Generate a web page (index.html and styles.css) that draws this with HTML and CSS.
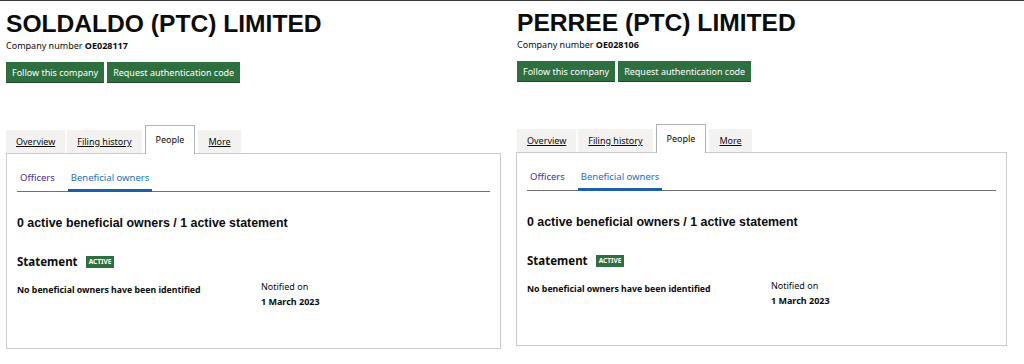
FILE: index.html
```html
<!DOCTYPE html>
<html lang="en">

<head>
    <meta charset="UTF-8">
    <meta name="viewport" content="width=device-width, initial-scale=1.0">
    <title>People - Beneficial owners</title>
    <link rel="stylesheet" href="styles.css">
</head>

<body>
    <div class="shots">
        <div class="page">
            <h1>SOLDALDO (PTC) LIMITED</h1>
            <p class="company-number">Company number <strong>OE028117</strong></p>
            <div class="actions">
                <button>Follow this company</button>
                <button>Request authentication code</button>
            </div>
            <ul class="tabs">
                <li><a href="#">Overview</a></li>
                <li><a href="#">Filing history</a></li>
                <li class="selected"><a href="#">People</a></li>
                <li><a href="#">More</a></li>
            </ul>
            <div class="panel">
                <ul class="subtabs">
                    <li><a href="#" class="visited">Officers</a></li>
                    <li class="current"><a href="#">Beneficial owners</a></li>
                </ul>
                <h2 class="summary">0 active beneficial owners / 1 active statement</h2>
                <h3 class="statement">Statement <span class="tag">ACTIVE</span></h3>
                <div class="statement-row">
                    <p class="statement-text">No beneficial owners have been identified</p>
                    <dl class="notified">
                        <dt>Notified on</dt>
                        <dd>1 March 2023</dd>
                    </dl>
                </div>
            </div>
        </div>

        <div class="page page-right">
            <h1>PERREE (PTC) LIMITED</h1>
            <p class="company-number">Company number <strong>OE028106</strong></p>
            <div class="actions">
                <button>Follow this company</button>
                <button>Request authentication code</button>
            </div>
            <ul class="tabs">
                <li><a href="#">Overview</a></li>
                <li><a href="#">Filing history</a></li>
                <li class="selected"><a href="#">People</a></li>
                <li><a href="#">More</a></li>
            </ul>
            <div class="panel">
                <ul class="subtabs">
                    <li><a href="#" class="visited">Officers</a></li>
                    <li class="current"><a href="#">Beneficial owners</a></li>
                </ul>
                <h2 class="summary">0 active beneficial owners / 1 active statement</h2>
                <h3 class="statement">Statement <span class="tag">ACTIVE</span></h3>
                <div class="statement-row">
                    <p class="statement-text">No beneficial owners have been identified</p>
                    <dl class="notified">
                        <dt>Notified on</dt>
                        <dd>1 March 2023</dd>
                    </dl>
                </div>
            </div>
        </div>
    </div>
</body>

</html>
```

FILE: styles.css
```css
body {
    margin: 0;
    padding: 0;
    background-color: #ffffff;
    color: #0b0c0c;
    font-family: "Noto Sans", "Liberation Sans", sans-serif;
}

.shots {
    display: grid;
    grid-template-columns: 511px 513px;
    border-top: 1px solid #3a3a3a;
}

.page {
    padding: 8px 0 0 6px;
}

.page-right {
    padding-top: 7px;
}

h1 {
    margin: 0;
    font-family: "Liberation Sans", Arial, sans-serif;
    font-size: 24.6px;
    font-weight: bold;
    line-height: 30px;
}

.company-number {
    margin: 0;
    font-size: 9px;
    line-height: 14px;
}

.actions {
    display: flex;
    gap: 3px;
    margin-top: 9px;
}

button {
    height: 21px;
    padding: 0 6px;
    border: none;
    border-bottom: 1px solid #1d4a2a;
    background-color: #2e6f40;
    color: white;
    font-family: "Noto Sans", "Liberation Sans", sans-serif;
    font-size: 9px;
    cursor: pointer;
}

.tabs {
    display: flex;
    align-items: flex-end;
    gap: 2px;
    list-style: none;
    margin: 43px 0 0;
    padding: 0;
    height: 27px;
}

.tabs li {
    background-color: #f3f2f1;
    height: 23px;
    padding: 0 10px;
    display: flex;
    align-items: center;
}

.tabs a {
    color: #0b0c0c;
    font-size: 9px;
}

.tabs li.selected {
    background-color: #ffffff;
    height: 27px;
    margin: 0 1px -1px;
    padding: 0 10px 1px;
    border: 1px solid #b1b4b6;
    border-bottom: none;
    position: relative;
    z-index: 1;
}

.tabs li.selected a {
    text-decoration: none;
}

.panel {
    width: 495px;
    height: 196px;
    border: 1px solid #c8cacb;
    padding: 0 10px 0 10px;
    box-sizing: border-box;
}

.page-right .panel {
    width: 491px;
    height: 194px;
    margin-left: -1px;
}

.subtabs {
    display: flex;
    list-style: none;
    margin: 6px 0 0;
    padding: 0 0 0 3px;
    border-bottom: 1px solid #6f7275;
}

.subtabs li {
    padding: 4px 0 5px;
    margin-right: 16px;
}

.subtabs a {
    font-size: 9.5px;
    text-decoration: none;
    color: #1d70b8;
}

.subtabs a.visited {
    color: #4c2c92;
}

.subtabs li.current {
    border-bottom: 3px solid #1d5fa6;
    margin-bottom: -1px;
    margin-left: -3px;
    padding: 4px 3px 3px;
}

.summary {
    margin: 23px 0 0;
    font-family: "Liberation Sans", Arial, sans-serif;
    font-size: 12.4px;
    line-height: 16px;
}

.statement {
    margin: 23px 0 0;
    font-size: 11.5px;
    line-height: 16px;
    display: flex;
    align-items: center;
    gap: 8px;
}

.tag {
    background-color: #2e6f40;
    color: white;
    font-size: 6.5px;
    font-weight: bold;
    padding: 2px 3px;
    line-height: 8px;
}

.statement-row {
    display: grid;
    grid-template-columns: 244px 1fr;
    margin-top: 10px;
}

.statement-text {
    margin: 4px 0 0;
    font-size: 8.75px;
    font-weight: bold;
}

.notified {
    margin: 0;
    font-size: 9px;
}

.notified dt {
    line-height: 14px;
}

.notified dd {
    margin: 1px 0 0;
    font-weight: bold;
    line-height: 14px;
}
```
